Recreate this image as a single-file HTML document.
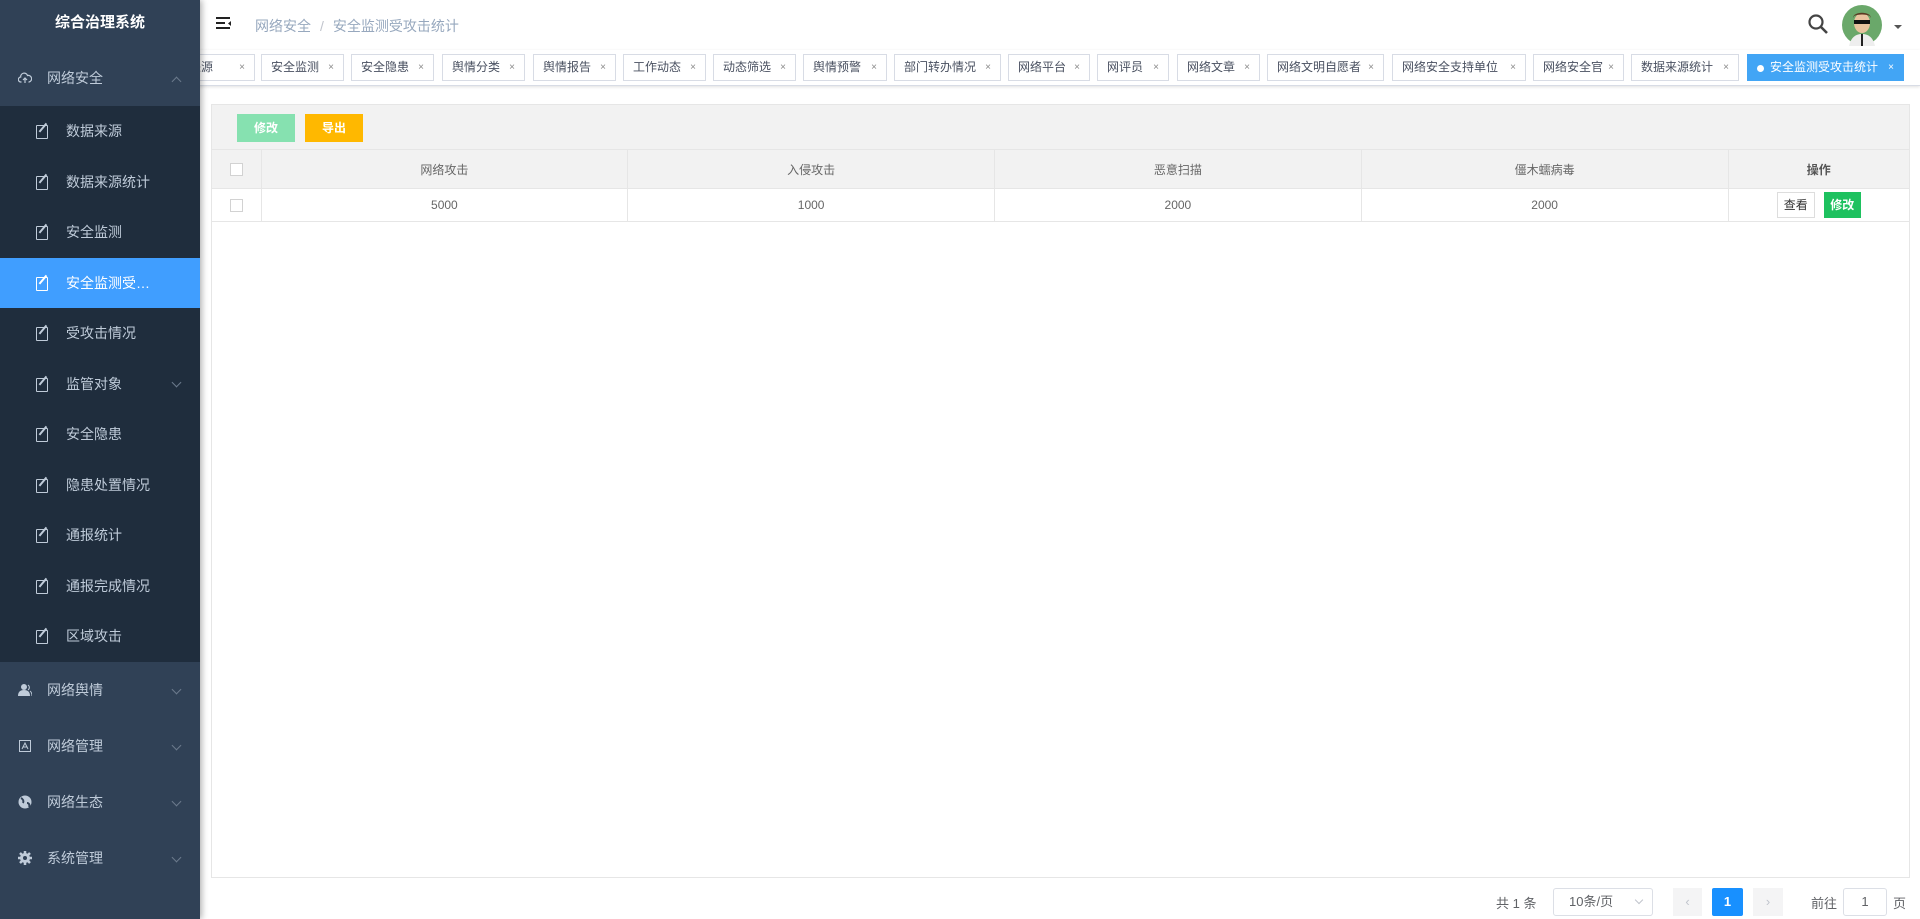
<!DOCTYPE html>
<html><head><meta charset="utf-8"><style>
*{margin:0;padding:0;box-sizing:border-box}
body{width:1920px;height:919px;overflow:hidden;background:#fff;font-family:"Liberation Sans","Noto Sans CJK SC",sans-serif;position:relative;color:#606266}
.sb{position:absolute;left:0;top:0;width:200px;height:919px;background:#304156;box-shadow:2px 0 6px rgba(0,0,0,.3);z-index:5}
.title{height:50px;line-height:46px;text-align:center;color:#fff;font-weight:bold;font-size:15px}
.grp{height:56px;line-height:56px;color:#bfcbd9;font-size:14px;padding-left:47px;position:relative}
.grp i{position:absolute;left:18px;top:21px;width:14px;height:14px;line-height:0}
.grp i svg{display:block}
.grp .ar{position:absolute;right:20px;top:24px;width:7px;height:7px;border-right:1px solid #6b7a8c;border-bottom:1px solid #6b7a8c;transform:rotate(45deg)}
.grp .ar.up{transform:rotate(-135deg);top:28px}
.sub{background:#1f2d3d}
.si{height:50.5px;line-height:50.5px;color:#bfcbd9;font-size:14px;padding-left:66px;position:relative}
.si.act{background:#409eff;color:#fff}
.si:before{content:"";position:absolute;left:36px;top:19px;width:10px;height:12px;border:1.3px solid currentColor;border-radius:1px}
.si:after{content:"";position:absolute;left:42px;top:16px;width:1.5px;height:11px;background:currentColor;transform:rotate(40deg)}
.si .ar{position:absolute;right:20px;top:20px;width:7px;height:7px;border-right:1px solid #6b7a8c;border-bottom:1px solid #6b7a8c;transform:rotate(45deg)}
.hdr{position:absolute;left:200px;top:0;right:0;height:50px}
.bc{position:absolute;left:55px;top:16px;font-size:14px;color:#97a8be}
.bc b{font-weight:normal;color:#c0c4cc;margin:0 9px}
.tabs{position:absolute;left:0;top:50px;width:1920px;height:36px;border-bottom:1px solid #d8dce5;box-shadow:0 1px 3px rgba(0,0,0,.12)}
.tab{position:absolute;top:4px;height:27px;line-height:25px;border:1px solid #d8dce5;font-size:12px;color:#495060;padding-left:9px;background:#fff;white-space:nowrap;overflow:hidden}
.tab:after{content:"×";position:absolute;right:9px;top:0;font-size:10px;color:#888}
.tab.on{background:#42a5f5;border-color:#42a5f5;color:#fff;padding-left:22px}
.tab.on:before{content:"";position:absolute;left:9px;top:10px;width:7px;height:7px;border-radius:50%;background:#fff}
.tab.on:after{color:#fff}
.card{position:absolute;left:211px;top:104px;width:1699px;height:774px;border:1px solid #e6e6e6}
.tb{height:44px;background:#f2f2f2;position:relative}
.btn{position:absolute;top:9px;height:28px;line-height:28px;width:58px;text-align:center;color:#fff;font-size:12px;font-weight:bold}
table{border-collapse:collapse;width:100%;font-size:12px;table-layout:fixed}
th{height:39px;background:#f2f2f2;font-weight:normal;color:#666;border-right:1px solid #e6e6e6;border-top:1px solid #e6e6e6}
td{height:33px;text-align:center;color:#666;border-right:1px solid #e6e6e6;border-top:1px solid #e6e6e6;border-bottom:1px solid #e6e6e6}
.cb{display:inline-block;width:13px;height:13px;border:1px solid #d2d2d2;background:#fff;vertical-align:middle}
.pg{position:absolute;top:888px;font-size:13px;color:#606266}
</style></head><body>
<div class="sb">
<div class="title">综合治理系统</div>
<div class="grp"><i><svg width="14" height="14" viewBox="0 0 14 14"><path d="M3.5 11H3a2.5 2.5 0 0 1-.3-5A3.5 3.5 0 0 1 9.5 4.5 2.5 2.5 0 0 1 11 11h-.5M7 12V7M5 9l2-2 2 2" fill="none" stroke="#bfcbd9" stroke-width="1.2"/></svg></i>网络安全<span class="ar up"></span></div>
<div class="sub">
<div class="si">数据来源</div>
<div class="si">数据来源统计</div>
<div class="si">安全监测</div>
<div class="si act">安全监测受…</div>
<div class="si">受攻击情况</div>
<div class="si">监管对象<span class="ar"></span></div>
<div class="si">安全隐患</div>
<div class="si">隐患处置情况</div>
<div class="si">通报统计</div>
<div class="si">通报完成情况</div>
<div class="si">区域攻击</div>
</div>
<div class="grp"><i><svg width="14" height="14"><circle cx="6" cy="4" r="3" fill="#bfcbd9"/><path d="M0 13c0-4 2-6 6-6s6 2 6 6z" fill="#bfcbd9"/><path d="M10 2a3 3 0 0 1 0 5M12 8c1.5 1 2 3 2 5" stroke="#bfcbd9" fill="none"/></svg></i>网络舆情<span class="ar"></span></div>
<div class="grp"><i><svg width="14" height="14"><rect x="1.5" y="1.5" width="11" height="11" fill="none" stroke="#bfcbd9"/><path d="M4 10l3-6 3 6M5 8h4" stroke="#bfcbd9" fill="none"/></svg></i>网络管理<span class="ar"></span></div>
<div class="grp"><i><svg width="14" height="14"><circle cx="7" cy="7" r="6.5" fill="#bfcbd9"/><path d="M3 3c2 1 3 3 2 5M9 8c2 0 3 2 2 4" stroke="#304156" stroke-width="2" fill="none"/></svg></i>网络生态<span class="ar"></span></div>
<div class="grp"><i><svg width="14" height="14"><path d="M7 0v14M0 7h14M2 2l10 10M12 2L2 12" stroke="#bfcbd9" stroke-width="2.5"/><circle cx="7" cy="7" r="5" fill="#bfcbd9"/><circle cx="7" cy="7" r="2" fill="#304156"/></svg></i>系统管理<span class="ar"></span></div>
</div>
<div class="hdr">
<svg style="position:absolute;left:15px;top:16px" width="18" height="16"><path d="M1 2h14M1 7h9M1 12h14" stroke="#222" stroke-width="2"/><path d="M16 5l-3 2.5 3 2.5z" fill="#222"/></svg>
<div class="bc">网络安全<b>/</b><span style="color:#97a8be">安全监测受攻击统计</span></div>
<svg style="position:absolute;left:1607px;top:13px" width="22" height="22"><circle cx="9" cy="9" r="6.5" fill="none" stroke="#444" stroke-width="2.2"/><path d="M14 14l6 6" stroke="#444" stroke-width="2.6"/></svg>
<svg style="position:absolute;left:1641px;top:4px" width="42" height="42"><circle cx="21" cy="21" r="20" fill="#6aa86a"/><path d="M8 42c2-9 7-12 13-12s11 3 13 12z" fill="#eee"/><rect x="20" y="30" width="2" height="12" fill="#222"/><ellipse cx="21" cy="19" rx="8" ry="10" fill="#e8c39e"/><path d="M12 14c0-7 18-7 18 0l-1-2c-4-2-12-2-16 0z" fill="#5a3a22"/><rect x="13" y="16" width="16" height="4" fill="#111"/></svg>
<div style="position:absolute;left:1694px;top:25px;border:4px solid transparent;border-top:4px solid #555"></div>
</div>
<div class="tabs">
<div class="tab" style="left:180px;width:75px;padding-left:0"><span style="margin-left:-4px">据来源</span></div>
<div class="tab" style="left:261px;width:83px">安全监测</div>
<div class="tab" style="left:351px;width:83px">安全隐患</div>
<div class="tab" style="left:442px;width:83px">舆情分类</div>
<div class="tab" style="left:533px;width:83px">舆情报告</div>
<div class="tab" style="left:623px;width:83px">工作动态</div>
<div class="tab" style="left:713px;width:83px">动态筛选</div>
<div class="tab" style="left:803px;width:84px">舆情预警</div>
<div class="tab" style="left:894px;width:107px">部门转办情况</div>
<div class="tab" style="left:1008px;width:82px">网络平台</div>
<div class="tab" style="left:1097px;width:72px">网评员</div>
<div class="tab" style="left:1177px;width:83px">网络文章</div>
<div class="tab" style="left:1267px;width:117px">网络文明自愿者</div>
<div class="tab" style="left:1392px;width:134px">网络安全支持单位</div>
<div class="tab" style="left:1533px;width:91px">网络安全官</div>
<div class="tab" style="left:1631px;width:108px">数据来源统计</div>
<div class="tab on" style="left:1747px;width:157px">安全监测受攻击统计</div>
</div>
<div class="card">
<div class="tb"><div class="btn" style="left:25px;background:#86e1b0">修改</div><div class="btn" style="left:93px;background:#ffb800">导出</div></div>
<table><colgroup><col style="width:49px"><col><col><col><col><col style="width:181px"></colgroup>
<tr><th><span class="cb"></span></th><th>网络攻击</th><th>入侵攻击</th><th>恶意扫描</th><th>僵木蠕病毒</th><th style="font-weight:bold;color:#555;border-right:0">操作</th></tr>
<tr><td><span class="cb"></span></td><td>5000</td><td>1000</td><td>2000</td><td>2000</td><td style="border-right:0"><span style="display:inline-block;width:38px;height:26px;line-height:24px;border:1px solid #ddd;color:#333;vertical-align:middle">查看</span><span style="display:inline-block;width:37px;height:26px;line-height:26px;background:#1ec15f;color:#fff;font-weight:bold;margin-left:9px;vertical-align:middle">修改</span></td></tr>
</table>
</div>
<div class="pg" style="left:1496px;top:893px">共 1 条</div>
<div class="pg" style="left:1553px;width:100px;height:28px;border:1px solid #dcdfe6;border-radius:3px;line-height:26px;padding-left:15px">10条/页<span style="position:absolute;right:10px;top:8px;width:6px;height:6px;border-right:1px solid #c0c4cc;border-bottom:1px solid #c0c4cc;transform:rotate(45deg)"></span></div>
<div class="pg" style="left:1673px;width:29px;height:28px;background:#f4f4f5;text-align:center;line-height:28px;color:#c0c4cc">‹</div>
<div class="pg" style="left:1712px;width:31px;height:28px;background:#1890ff;color:#fff;text-align:center;line-height:28px;font-weight:bold;border-radius:2px">1</div>
<div class="pg" style="left:1753px;width:30px;height:28px;background:#f4f4f5;text-align:center;line-height:28px;color:#c0c4cc">›</div>
<div class="pg" style="left:1811px;top:893px">前往</div>
<div class="pg" style="left:1843px;width:44px;height:28px;border:1px solid #dcdfe6;border-radius:3px;text-align:center;line-height:26px">1</div>
<div class="pg" style="left:1893px;top:893px">页</div>
</body></html>
